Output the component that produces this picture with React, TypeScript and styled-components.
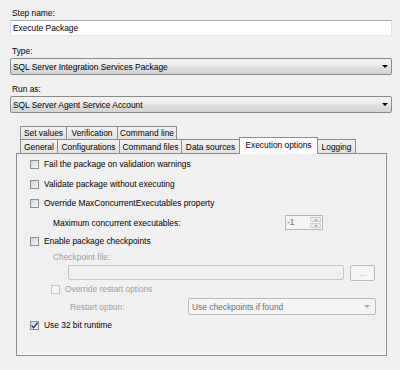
import React from "react";
import styled, {createGlobalStyle} from "styled-components";

const GlobalStyle = createGlobalStyle`
  body {
    margin: 0;
    background: #f0f0f0;
    font-family: "Liberation Sans", Arial, sans-serif;
    font-size: 8.4px;
    color: #000;
  }
`

type TabType = {
    title: string
    width: number
    active?: boolean
}

const topTabs: Array<TabType> = [
    {title: "Set values", width: 47},
    {title: "Verification", width: 52},
    {title: "Command line", width: 60},
]

const bottomTabs: Array<TabType> = [
    {title: "General", width: 38},
    {title: "Configurations", width: 63},
    {title: "Command files", width: 63},
    {title: "Data sources", width: 59},
    {title: "Execution options", width: 79, active: true},
    {title: "Logging", width: 39},
]

const CheckMark = () => (
    <svg width="9" height="9" viewBox="0 0 9 9">
        <path d="M1.6 4.6 L3.6 6.7 L7.6 1.8" fill="none" stroke="#1f3a7a" strokeWidth="1.4"/>
    </svg>
)

function App() {
    return (
        <Page>
            <GlobalStyle/>
            <Field $mt={0}>
                <FieldLabel>Step name:</FieldLabel>
                <TextInput>Execute Package</TextInput>
            </Field>
            <Field $mt={9}>
                <FieldLabel>Type:</FieldLabel>
                <Combo>SQL Server Integration Services Package<Arrow/></Combo>
            </Field>
            <Field $mt={8}>
                <FieldLabel>Run as:</FieldLabel>
                <Combo>SQL Server Agent Service Account<Arrow/></Combo>
            </Field>

            <TabControl>
                <TabRow $h={13}>
                    {topTabs.map(t => <Tab key={t.title} $w={t.width}>{t.title}</Tab>)}
                </TabRow>
                <TabRow $h={14}>
                    {bottomTabs.map(t => <Tab key={t.title} $w={t.width} $active={t.active}>{t.title}</Tab>)}
                </TabRow>
                <Panel>
                    <Row $h={14} $mt={0} $indent={13}>
                        <CheckBox/>
                        <CheckText>Fail the package on validation warnings</CheckText>
                    </Row>
                    <Row $h={14} $mt={6} $indent={13}>
                        <CheckBox/>
                        <CheckText>Validate package without executing</CheckText>
                    </Row>
                    <Row $h={14} $mt={5} $indent={13}>
                        <CheckBox/>
                        <CheckText>Override MaxConcurrentExecutables property</CheckText>
                    </Row>
                    <Row $h={15} $mt={5} $indent={36}>
                        <Caption $w={232}>Maximum concurrent executables:</Caption>
                        <Spin>
                            <SpinValue>-1</SpinValue>
                            <SpinButtons>
                                <SpinButton><SpinArrow $up/></SpinButton>
                                <SpinButton><SpinArrow/></SpinButton>
                            </SpinButtons>
                        </Spin>
                    </Row>
                    <Row $h={14} $mt={4} $indent={13}>
                        <CheckBox/>
                        <CheckText>Enable package checkpoints</CheckText>
                    </Row>
                    <Row $h={14} $mt={2} $indent={36}>
                        <Caption $disabled>Checkpoint file:</Caption>
                    </Row>
                    <Row $h={15} $mt={1} $indent={51}>
                        <DisabledInput/>
                        <BrowseButton>...</BrowseButton>
                    </Row>
                    <Row $h={14} $mt={2} $indent={34}>
                        <CheckBox $disabled/>
                        <CheckText $disabled $gap={5}>Override restart options</CheckText>
                    </Row>
                    <Row $h={17} $mt={2} $indent={53}>
                        <Caption $w={118} $disabled>Restart option:</Caption>
                        <DisabledCombo>Use checkpoints if found<Arrow $disabled/></DisabledCombo>
                    </Row>
                    <Row $h={14} $mt={3} $indent={13}>
                        <CheckBox><CheckMark/></CheckBox>
                        <CheckText>Use 32 bit runtime</CheckText>
                    </Row>
                </Panel>
            </TabControl>
        </Page>
    )
}

export default App

const Page = styled.div`
  width: 400px;
  height: 370px;
  box-sizing: border-box;
  padding: 7px 8px 0 10px;
  display: flex;
  flex-direction: column;
`

const Field = styled.div<{ $mt: number }>`
  display: flex;
  flex-direction: column;
  margin-top: ${p => p.$mt}px;
`

const FieldLabel = styled.div`
  height: 13px;
  line-height: 13px;
  padding-left: 2px;
`

const TextInput = styled.div`
  height: 16px;
  box-sizing: border-box;
  border: 1px solid;
  border-color: #abadb3 #dbdfe6 #e3e9ef #e2e3ea;
  background: #fff;
  padding-left: 2px;
  line-height: 14px;
`

const Combo = styled.div`
  height: 17px;
  box-sizing: border-box;
  border: 1px solid #8a8a8a;
  border-radius: 2px;
  background: linear-gradient(#f4f4f4 0%, #ececec 45%, #dfdfdf 55%, #d4d4d4 100%);
  display: flex;
  align-items: center;
  padding-left: 2px;
`

const Arrow = styled.span<{ $disabled?: boolean }>`
  margin-left: auto;
  margin-right: ${p => p.$disabled ? 5 : 3}px;
  width: 0;
  height: 0;
  border-left: 3px solid transparent;
  border-right: 3px solid transparent;
  border-top: 3px solid ${p => p.$disabled ? "#a8a8a8" : "#000"};
`

const TabControl = styled.div`
  margin: 13px 0 0 6px;
  width: 371px;
  display: flex;
  flex-direction: column;
`

const TabRow = styled.div<{ $h: number }>`
  display: flex;
  align-items: flex-end;
  height: ${p => p.$h}px;
  padding-left: 4px;
`

const Tab = styled.div<{ $w: number, $active?: boolean }>`
  width: ${p => p.$w}px;
  height: ${p => p.$active ? "17px" : "100%"};
  box-sizing: border-box;
  margin-right: -1px;
  margin-bottom: ${p => p.$active ? "-1px" : "0"};
  border: 1px solid #898c95;
  border-bottom: none;
  background: ${p => p.$active ? "#fff" : "linear-gradient(#f3f3f3, #e2e2e2)"};
  display: flex;
  align-items: center;
  justify-content: center;
  white-space: nowrap;
  position: relative;
  z-index: ${p => p.$active ? 2 : 1};
  padding-bottom: ${p => p.$active ? "2px" : "0"};
`

const Panel = styled.div`
  height: 203px;
  box-sizing: border-box;
  border: 1px solid #898c95;
  box-shadow: inset -1px -1px 0 #fff;
  display: flex;
  flex-direction: column;
  padding-top: 3px;
`

const Row = styled.div<{ $h: number, $mt: number, $indent: number }>`
  display: flex;
  align-items: center;
  height: ${p => p.$h}px;
  margin-top: ${p => p.$mt}px;
  padding-left: ${p => p.$indent}px;
  white-space: nowrap;
`

const CheckBox = styled.span<{ $disabled?: boolean }>`
  width: 9px;
  height: 9px;
  box-sizing: border-box;
  border: 1px solid ${p => p.$disabled ? "#c4c4c4" : "#8e8f8f"};
  background: ${p => p.$disabled ? "#f4f4f4" : "linear-gradient(135deg, #d2d5d9, #f7f7f7)"};
  display: flex;
  align-items: center;
  justify-content: center;

  & svg {
    margin: -1px;
  }
`

const CheckText = styled.span<{ $disabled?: boolean, $gap?: number }>`
  margin-left: ${p => p.$gap ?? 5}px;
  color: ${p => p.$disabled ? "#a0a0a0" : "#000"};
`

const Caption = styled.span<{ $w?: number, $disabled?: boolean }>`
  width: ${p => p.$w ? `${p.$w}px` : "auto"};
  flex-shrink: 0;
  color: ${p => p.$disabled ? "#a0a0a0" : "#000"};
`

const Spin = styled.div`
  width: 38px;
  height: 15px;
  box-sizing: border-box;
  border: 1px solid #b5b8bf;
  background: #f4f4f4;
  display: flex;
`

const SpinValue = styled.span`
  flex: 1;
  padding-left: 1px;
  line-height: 13px;
  color: #6d6d6d;
`

const SpinButtons = styled.div`
  width: 11px;
  margin: 1px 1px 1px 0;
  display: flex;
  flex-direction: column;
  gap: 1px;
`

const SpinButton = styled.div`
  flex: 1;
  border: 1px solid #d0d0d0;
  background: #ececec;
  display: flex;
  align-items: center;
  justify-content: center;
`

const SpinArrow = styled.span<{ $up?: boolean }>`
  width: 0;
  height: 0;
  border-left: 2px solid transparent;
  border-right: 2px solid transparent;
  ${p => p.$up ? "border-bottom: 2px solid #a8a8a8;" : "border-top: 2px solid #a8a8a8;"}
`

const DisabledInput = styled.div`
  width: 276px;
  height: 15px;
  box-sizing: border-box;
  border: 1px solid #c6c6c6;
  border-radius: 2px;
  background: #f0f0f0;
`

const BrowseButton = styled.div`
  width: 25px;
  height: 16px;
  margin-left: 6px;
  box-sizing: border-box;
  border: 1px solid #b9b9b9;
  border-radius: 2px;
  background: #f4f4f4;
  color: #a0a0a0;
  display: flex;
  align-items: center;
  justify-content: center;
`

const DisabledCombo = styled.div`
  width: 188px;
  height: 17px;
  box-sizing: border-box;
  border: 1px solid #b9b9b9;
  border-radius: 2px;
  background: #f4f4f4;
  color: #6d6d6d;
  display: flex;
  align-items: center;
  padding-left: 3px;
`
